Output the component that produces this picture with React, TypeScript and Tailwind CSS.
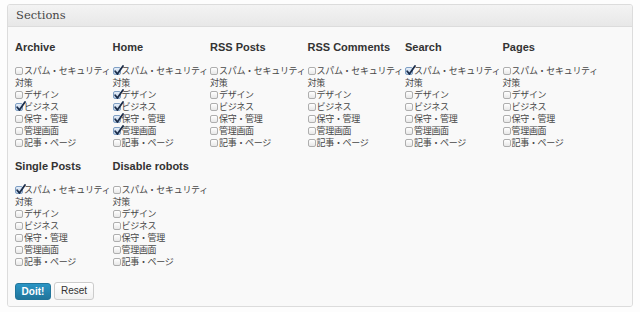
import React from "react";

type Col = { title: string; checked: boolean[] };

const ITEMS = ["スパム・セキュリティ対策", "デザイン", "ビジネス", "保守・管理", "管理画面", "記事・ページ"];

const ROW1: Col[] = [
  { title: "Archive", checked: [false, false, true, false, false, false] },
  { title: "Home", checked: [true, true, true, true, true, false] },
  { title: "RSS Posts", checked: [false, false, false, false, false, false] },
  { title: "RSS Comments", checked: [false, false, false, false, false, false] },
  { title: "Search", checked: [true, false, false, false, false, false] },
  { title: "Pages", checked: [false, false, false, false, false, false] },
];

const ROW2: Col[] = [
  { title: "Single Posts", checked: [true, false, false, false, false, false] },
  { title: "Disable robots", checked: [false, false, false, false, false, false] },
];

function Box({ checked }: { checked: boolean }) {
  return (
    <span
      className={
        "relative inline-block w-[8px] h-[8px] mr-[1px] align-[-1px] rounded-[2px] border " +
        (checked
          ? "border-[#7f9fc4] bg-gradient-to-b from-[#e6eef8] to-[#bcd0e8]"
          : "border-[#aeaeae] bg-gradient-to-b from-[#ffffff] to-[#e8e8e8]")
      }
    >
      {checked && (
        <svg
          className="absolute left-[0px] top-[-3px]"
          width="10"
          height="11"
          viewBox="0 0 10 11"
        >
          <path d="M1.2 6.2 L3.4 9 L9 1" fill="none" stroke="#1b2d4a" strokeWidth="1.8" strokeLinecap="round" strokeLinejoin="round" />
        </svg>
      )}
    </span>
  );
}

function Column({ col }: { col: Col }) {
  return (
    <div className="w-[97.5px]">
      <div className="h-[14px] leading-[14px] text-[11px] font-bold text-[#333] mb-[11px]" style={{ fontFamily: '"Liberation Sans", Arial, sans-serif' }}>
        {col.title}
      </div>
      <div className="text-[9px] leading-[12px] tracking-[-0.3px] text-[#474747]" style={{ fontFamily: '"Noto Sans CJK JP", sans-serif' }}>
        {ITEMS.map((it, i) => (
          <div key={i}>
            <Box checked={col.checked[i]} />
            {it}
          </div>
        ))}
      </div>
    </div>
  );
}

export default function App() {
  return (
    <div className="w-[640px] h-[312px] bg-[#fdfdfd] pt-[4px] pl-[7px]">
      <div className="w-[626px] border border-[#dcdcdc] rounded-[3px] bg-[#f8f8f8] overflow-hidden">
        <div
          className="h-[22px] leading-[21px] px-[8px] text-[#464646] bg-gradient-to-b from-[#f3f3f3] to-[#e8e8e8] border-b border-[#dcdcdc]"
          style={{ fontFamily: '"DejaVu Serif", Georgia, serif', fontSize: "11.5px" }}
        >
          Sections
        </div>
        <div className="pt-[13px] pl-[7px] pb-[6px] bg-[#f9f9f9]">
          <div className="flex">
            {ROW1.map((c) => (
              <Column key={c.title} col={c} />
            ))}
          </div>
          <div className="flex mt-[10px]">
            {ROW2.map((c) => (
              <Column key={c.title} col={c} />
            ))}
          </div>
          <div className="flex items-center gap-[3px] mt-[14px]" style={{ fontFamily: '"Liberation Sans", Arial, sans-serif' }}>
            <button className="w-[36px] h-[17px] rounded-[3px] border border-[#21759b] bg-gradient-to-b from-[#2a95c5] to-[#21759b] text-white text-[10px] font-bold leading-[15px]">
              Doit!
            </button>
            <button className="w-[40px] h-[18px] rounded-[3px] border border-[#cccccc] bg-gradient-to-b from-[#ffffff] to-[#f1f1f1] text-[#333] text-[10px] leading-[16px]">
              Reset
            </button>
          </div>
        </div>
      </div>
    </div>
  );
}
